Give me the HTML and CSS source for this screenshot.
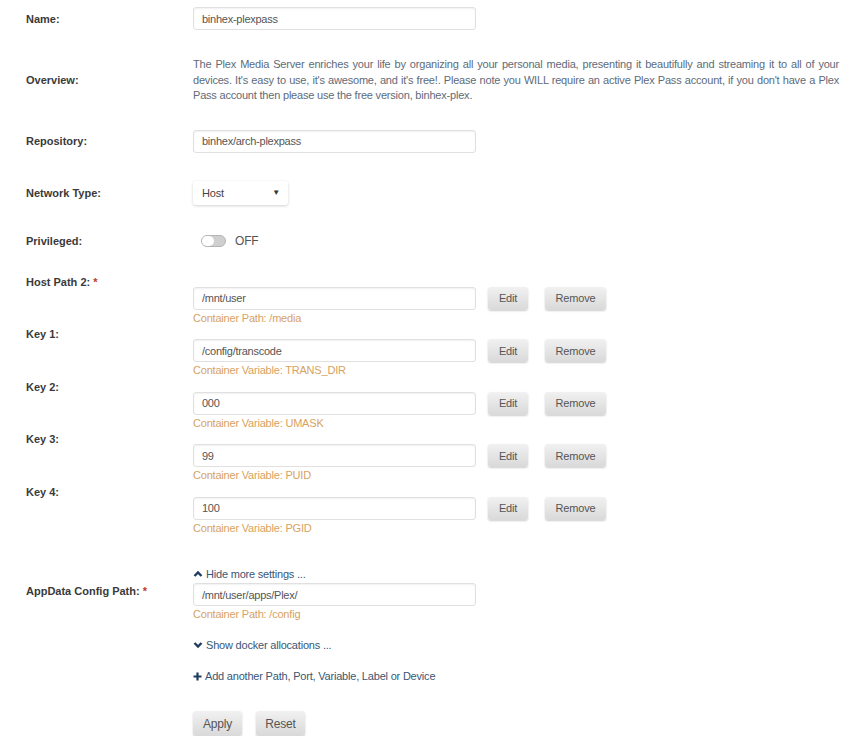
FILE: index.html
```html
<!DOCTYPE html>
<html lang="en">

<head>
  <meta charset="UTF-8">
  <meta name="viewport" content="width=device-width, initial-scale=1.0">
  <title>Update Container</title>
  <link rel="stylesheet" href="styles.css">
</head>

<body>
  <form class="template">
    <div class="row row-name">
      <label class="label">Name:</label>
      <input class="textbox" type="text" value="binhex-plexpass">
    </div>

    <div class="row row-overview">
      <label class="label">Overview:</label>
      <p class="overview">The Plex Media Server enriches your life by organizing all your personal media, presenting it beautifully and streaming it to all of your devices. It's easy to use, it's awesome, and it's free!. Please note you WILL require an active Plex Pass account, if you don't have a Plex Pass account then please use the free version, binhex-plex.</p>
    </div>

    <div class="row row-repo">
      <label class="label">Repository:</label>
      <input class="textbox" type="text" value="binhex/arch-plexpass">
    </div>

    <div class="row row-network">
      <label class="label">Network Type:</label>
      <div class="select">
        <span>Host</span>
        <span class="caret">&#9660;</span>
      </div>
    </div>

    <div class="row row-priv">
      <label class="label">Privileged:</label>
      <div class="switch">
        <span class="track"><span class="knob"></span></span>
        <span class="switch-text">OFF</span>
      </div>
    </div>

    <div class="config-list">
      <div class="config">
        <label class="label">Host Path 2: <span class="req">*</span></label>
        <div class="config-body">
          <div class="config-line">
            <input class="textbox" type="text" value="/mnt/user">
            <button type="button" class="btn btn-edit">Edit</button>
            <button type="button" class="btn btn-remove">Remove</button>
          </div>
          <div class="note">Container Path: /media</div>
        </div>
      </div>

      <div class="config">
        <label class="label">Key 1:</label>
        <div class="config-body">
          <div class="config-line">
            <input class="textbox" type="text" value="/config/transcode">
            <button type="button" class="btn btn-edit">Edit</button>
            <button type="button" class="btn btn-remove">Remove</button>
          </div>
          <div class="note">Container Variable: TRANS_DIR</div>
        </div>
      </div>

      <div class="config">
        <label class="label">Key 2:</label>
        <div class="config-body">
          <div class="config-line">
            <input class="textbox" type="text" value="000">
            <button type="button" class="btn btn-edit">Edit</button>
            <button type="button" class="btn btn-remove">Remove</button>
          </div>
          <div class="note">Container Variable: UMASK</div>
        </div>
      </div>

      <div class="config">
        <label class="label">Key 3:</label>
        <div class="config-body">
          <div class="config-line">
            <input class="textbox" type="text" value="99">
            <button type="button" class="btn btn-edit">Edit</button>
            <button type="button" class="btn btn-remove">Remove</button>
          </div>
          <div class="note">Container Variable: PUID</div>
        </div>
      </div>

      <div class="config">
        <label class="label">Key 4:</label>
        <div class="config-body">
          <div class="config-line">
            <input class="textbox" type="text" value="100">
            <button type="button" class="btn btn-edit">Edit</button>
            <button type="button" class="btn btn-remove">Remove</button>
          </div>
          <div class="note">Container Variable: PGID</div>
        </div>
      </div>
    </div>

    <div class="row row-toggle-more">
      <span></span>
      <a class="link" href="#">
        <svg width="10" height="8" viewBox="0 0 10 8"><polyline points="1.5,6 5,2.5 8.5,6" fill="none" stroke="#1f3c5c" stroke-width="2.4"/></svg>
        Hide more settings ...
      </a>
    </div>

    <div class="row row-appdata">
      <label class="label">AppData Config Path: <span class="req">*</span></label>
      <div class="config-body">
        <input class="textbox" type="text" value="/mnt/user/apps/Plex/">
        <div class="note">Container Path: /config</div>
      </div>
    </div>

    <div class="row row-docker">
      <span></span>
      <a class="link" href="#">
        <svg width="10" height="8" viewBox="0 0 10 8"><polyline points="1.5,2 5,5.5 8.5,2" fill="none" stroke="#1f3c5c" stroke-width="2.4"/></svg>
        Show docker allocations ...
      </a>
    </div>

    <div class="row row-add">
      <span></span>
      <a class="link" href="#">
        <svg width="9" height="9" viewBox="0 0 9 9"><path d="M4.5 0.5v8M0.5 4.5h8" stroke="#1f3c5c" stroke-width="2.2"/></svg>
        Add another Path, Port, Variable, Label or Device
      </a>
    </div>

    <div class="row row-actions">
      <span></span>
      <div class="actions">
        <button type="button" class="btn btn-big">Apply</button>
        <button type="button" class="btn btn-big">Reset</button>
      </div>
    </div>
  </form>
</body>

</html>
```

FILE: styles.css
```css
body {
  margin: 0;
  background: #fff;
  font-family: "Liberation Sans", Arial, sans-serif;
  font-size: 11px;
  letter-spacing: -0.2px;
  color: #555;
}

.template {
  padding: 7px 0 0 26px;
}

.row {
  display: grid;
  grid-template-columns: 167px 1fr;
  align-items: center;
}

.label {
  font-weight: bold;
  color: #3a3a3a;
  font-size: 11px;
  letter-spacing: 0;
}

.req {
  color: #c0392b;
}

.textbox {
  box-sizing: border-box;
  width: 283px;
  height: 23px;
  margin: 0;
  padding: 0 8px;
  border: 1px solid #e0e0e0;
  border-radius: 3px;
  box-shadow: inset 0 1px 2px rgba(0, 0, 0, 0.06);
  background: #fff;
  font-family: "Liberation Sans", Arial, sans-serif;
  font-size: 11px;
  letter-spacing: -0.25px;
  color: #555;
}

.row-overview {
  margin-top: 27px;
}

.overview {
  margin: 0;
  width: 646px;
  line-height: 15.5px;
  text-align: justify;
  color: #5e6b79;
}

.row-repo {
  margin-top: 26px;
}

.row-network {
  margin-top: 28px;
}

.select {
  box-sizing: border-box;
  width: 95px;
  height: 24px;
  display: flex;
  align-items: center;
  justify-content: space-between;
  padding: 0 8px 0 9px;
  border-radius: 3px;
  background: #fff;
  box-shadow: 0 1px 3px rgba(0, 0, 0, 0.18);
  color: #444;
}

.caret {
  font-size: 8px;
  color: #333;
}

.row-priv {
  margin-top: 26px;
  height: 20px;
}

.switch {
  display: flex;
  align-items: center;
  padding-left: 8px;
}

.track {
  box-sizing: border-box;
  width: 25px;
  height: 12px;
  border: 1px solid #b5b5b5;
  border-radius: 6px;
  background: #cfcfcf;
  display: flex;
}

.knob {
  width: 12px;
  height: 10px;
  border-radius: 5px;
  background: #fff;
}

.switch-text {
  margin-left: 9px;
  font-size: 12px;
  color: #555;
}

.config-list {
  margin-top: 23px;
}

.config {
  display: grid;
  grid-template-columns: 167px 1fr;
  height: 52.5px;
}

.config .label {
  line-height: 16px;
}

.config-body {
  padding-top: 13px;
}

.config-line {
  display: flex;
  align-items: center;
}

.note {
  line-height: 16px;
  color: #d8a262;
}

.btn {
  box-sizing: border-box;
  height: 23px;
  padding: 0;
  border: none;
  border-radius: 3px;
  background: linear-gradient(#f1f1f1, #d9d9d9);
  box-shadow: 0 1px 2px rgba(0, 0, 0, 0.2);
  font-family: "Liberation Sans", Arial, sans-serif;
  font-size: 11px;
  letter-spacing: -0.2px;
  color: #555;
}

.btn-edit {
  width: 40px;
  margin-left: 12px;
}

.btn-remove {
  width: 61px;
  margin-left: 17px;
}

.row-toggle-more {
  margin-top: 30px;
  line-height: 16px;
}

.link {
  color: #3a5674;
  text-decoration: none;
  display: flex;
  align-items: center;
  gap: 3px;
}

.row-appdata {
  align-items: start;
  margin-top: 1px;
}

.row-appdata .label {
  line-height: 16px;
}

.row-appdata .config-body {
  padding-top: 0;
}

.row-docker {
  margin-top: 15px;
  line-height: 16px;
}

.row-add {
  margin-top: 15px;
  line-height: 16px;
}

.row-actions {
  margin-top: 27px;
}

.actions {
  display: flex;
  gap: 14px;
}

.btn-big {
  width: 49px;
  height: 25px;
  font-size: 12px;
}
```
